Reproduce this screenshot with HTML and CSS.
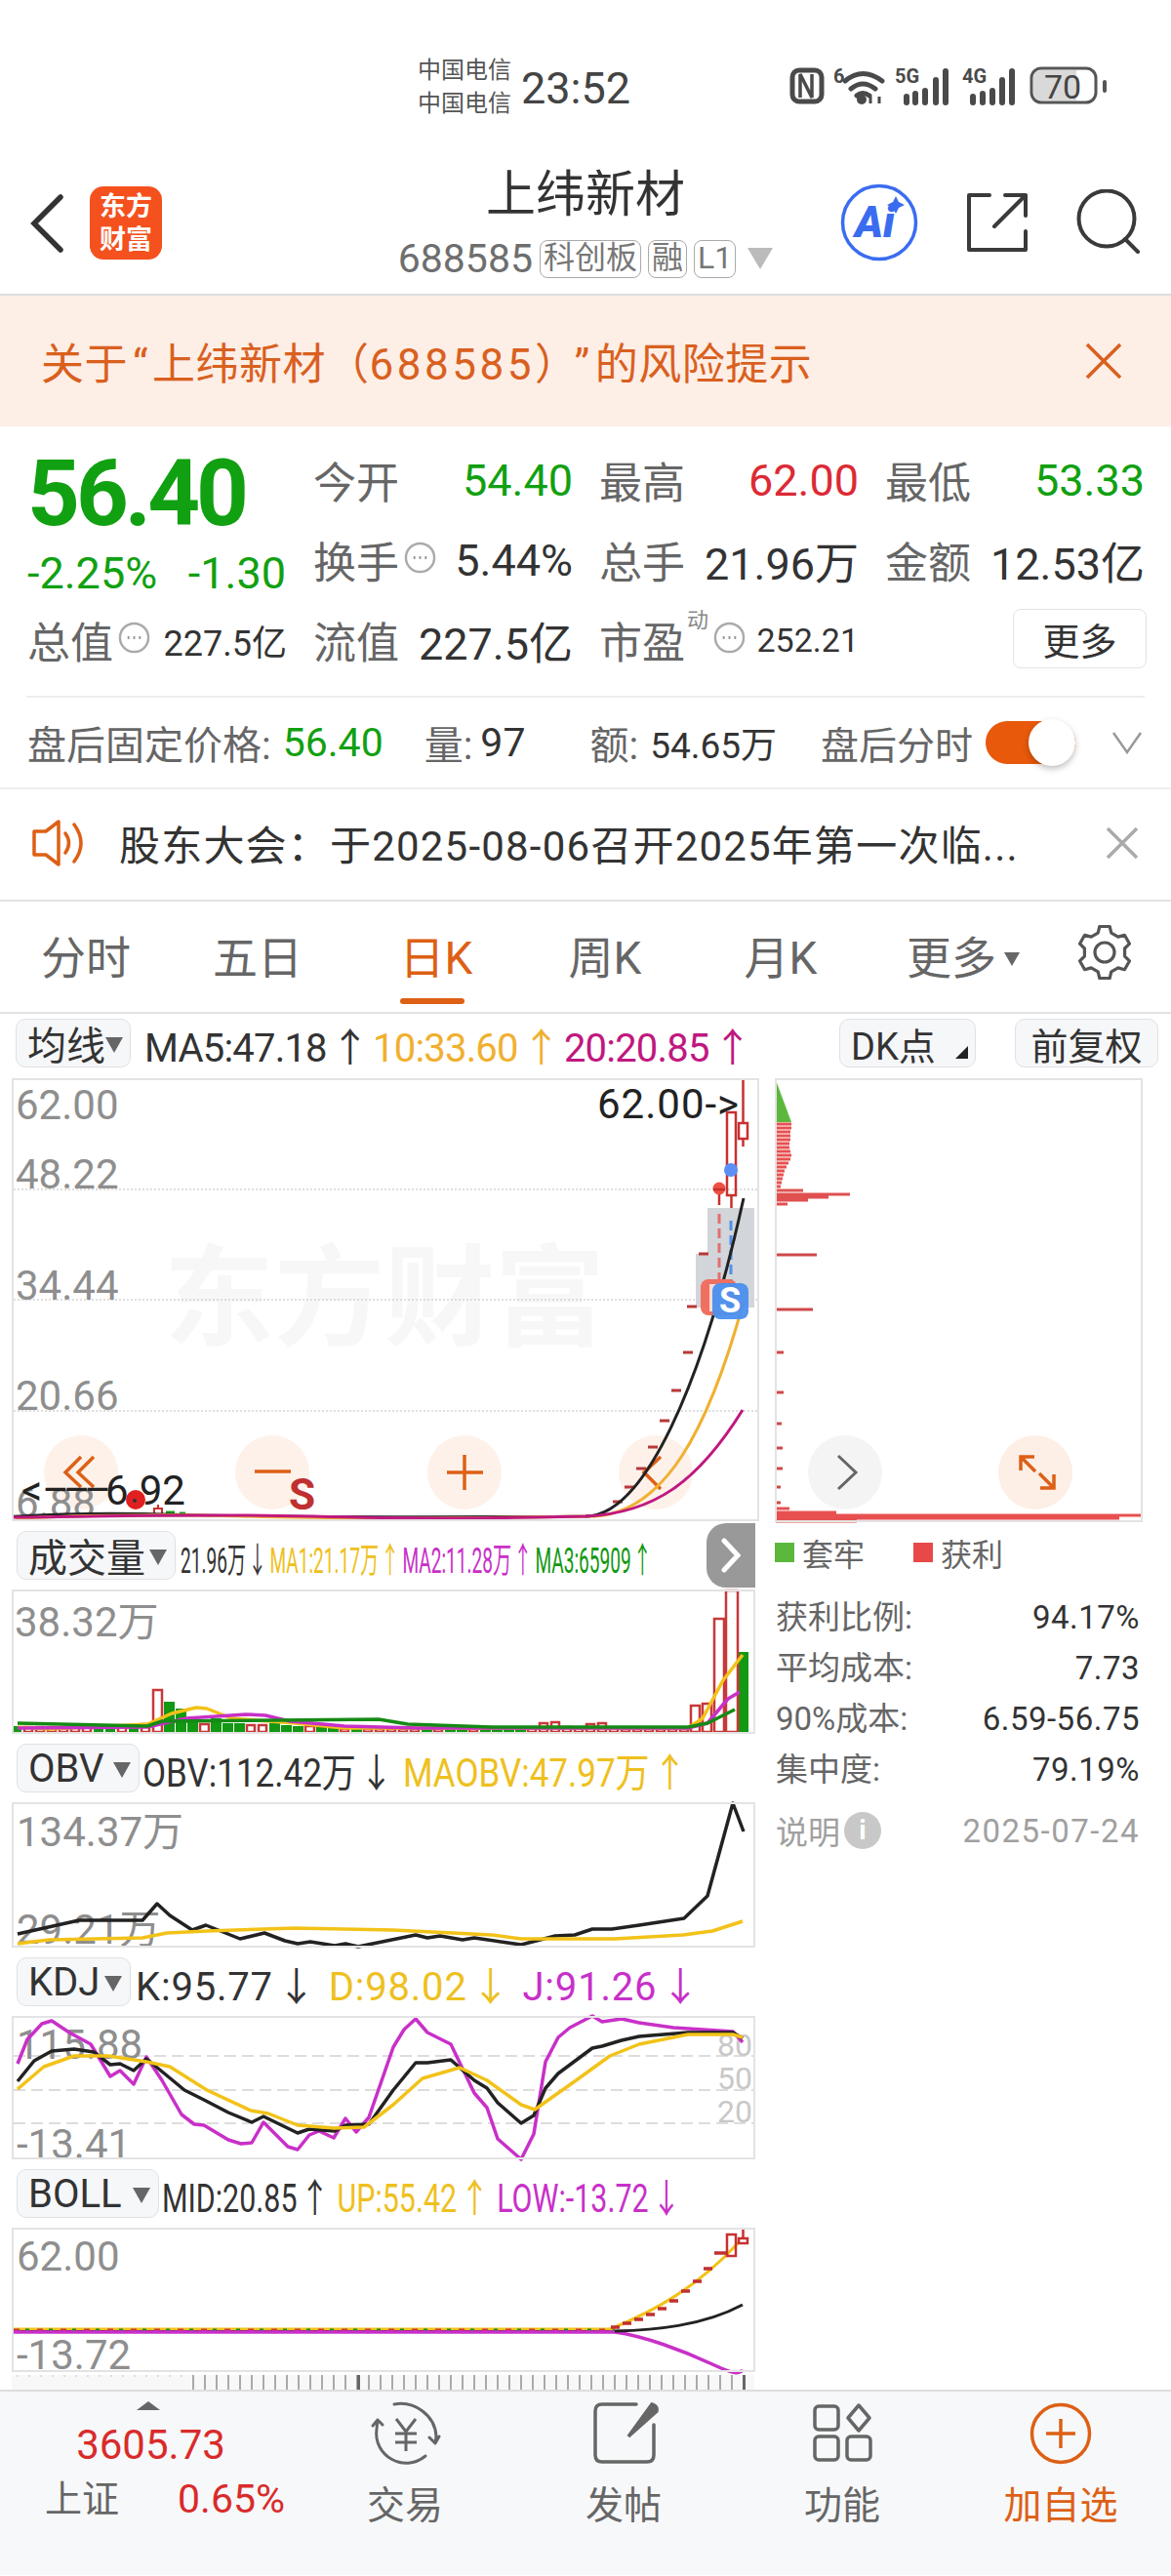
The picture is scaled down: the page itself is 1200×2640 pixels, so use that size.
FILE: index.html
```html
<!DOCTYPE html>
<html lang="zh-CN">
<head>
  <meta charset="UTF-8">
  <title>上纬新材</title>
  <link rel="stylesheet" href="styles.css">
</head>
<body>
  <svg class="defs" width="0" height="0">
    <symbol id="tip" viewBox="0 0 34 34">
      <circle cx="17" cy="17" r="15" fill="none" stroke="#aaa" stroke-width="2.5"/>
      <path d="M10 17h2M16 17h2M22 17h2" stroke="#999" stroke-width="3"/>
    </symbol>
  </svg>

  <!-- 状态栏 -->
  <div class="status">
    <div class="carrier"><span>中国电信</span><span>中国电信</span></div>
    <div class="clock">23:52</div>
    <svg class="status-icons" width="330" height="44" viewBox="805 66 330 44">
      <rect x="812" y="72" width="30" height="32" rx="7" fill="none" stroke="#4a4a4a" stroke-width="5"/>
      <path d="M820 100V76l12 24V76" fill="none" stroke="#4a4a4a" stroke-width="3.5"/>
      <text class="net" x="854" y="85">6</text>
      <path d="M866 83q18-15 38 0M872 91q12-10 25 0M878 98q6-5 13 0" fill="none" stroke="#4a4a4a" stroke-width="5" stroke-linecap="round"/>
      <circle cx="883" cy="102" r="5" fill="#4a4a4a"/>
      <path d="M892 106v-7M901 106v-7" stroke="#4a4a4a" stroke-width="3"/>
      <text class="net" x="917" y="85">5G</text>
      <path d="M929 105v-6M938 105v-9M948 105v-12M959 105v-23M969 105v-32" stroke="#4a4a4a" stroke-width="6" stroke-linecap="round"/>
      <text class="net" x="986" y="85">4G</text>
      <path d="M997 105v-6M1007 105v-9M1017 105v-12M1027 105v-23M1037 105v-32" stroke="#4a4a4a" stroke-width="6" stroke-linecap="round"/>
      <rect x="1057" y="70" width="66" height="35" rx="10" fill="#fff" stroke="#555" stroke-width="3"/>
      <path d="M1059 80a8 8 0 0 1 8-8h36v31h-36a8 8 0 0 1-8-8z" fill="#d9d9d9"/>
      <text class="batt" x="1089" y="101">70</text>
      <rect x="1130" y="82" width="4" height="13" rx="2" fill="#555"/>
    </svg>
  </div>

  <!-- 标题 -->
  <header class="topbar">
    <div class="top-left">
      <svg width="36" height="60" viewBox="0 0 36 60"><path d="M32 3L5 30l27 27" fill="none" stroke="#333" stroke-width="5.5" stroke-linecap="round"/></svg>
      <div class="logo">东方<br>财富</div>
    </div>
    <div class="top-title">
      <div class="name">上纬新材</div>
      <div class="code">688585<span class="tag">科创板</span><span class="tag">融</span><span class="tag">L1</span><i class="tri"></i></div>
    </div>
    <div class="top-right">
      <svg width="80" height="80" viewBox="0 0 80 80">
        <circle cx="40" cy="40" r="37.5" fill="none" stroke="#3b6cf0" stroke-width="3.5"/>
        <text class="ai" x="15" y="55">Ai</text>
        <path d="M57 13l3 6 6 3-6 3-3 6-3-6-6-3 6-3z" fill="#3b6cf0"/>
      </svg>
      <svg width="64" height="64" viewBox="0 0 64 64">
        <path d="M25 4H4v56h58V41M41 4h21v21M62 4L30 36" fill="none" stroke="#3a3a3a" stroke-width="4" stroke-linecap="round" stroke-linejoin="round"/>
      </svg>
      <svg width="66" height="66" viewBox="0 0 66 66">
        <circle cx="31" cy="30" r="28.5" fill="none" stroke="#3a3a3a" stroke-width="4"/>
        <path d="M50 51l13 13" stroke="#3a3a3a" stroke-width="4" stroke-linecap="round"/>
      </svg>
    </div>
  </header>

  <div class="risk">
    <span>关于<span class="ql">“</span>上纬新材（<span class="rn">688585</span>）<span class="qr">”</span>的风险提示</span>
    <svg width="38" height="38" viewBox="0 0 38 38"><path d="M2 2l34 34M36 2L2 36" stroke="#d9601e" stroke-width="3.5"/></svg>
  </div>

  <!-- 行情 -->
  <section class="quote">
    <div class="price-cell">
      <div class="price">56.40</div>
      <div class="change"><span>-2.25%</span><span>-1.30</span></div>
    </div>
    <div class="stat"><span class="lab">今开</span><span class="val down">54.40</span></div>
    <div class="stat"><span class="lab">最高</span><span class="val up">62.00</span></div>
    <div class="stat"><span class="lab">最低</span><span class="val down">53.33</span></div>
    <div class="stat"><span class="lab">换手</span><svg class="tip"><use href="#tip"/></svg><span class="val">5.44%</span></div>
    <div class="stat"><span class="lab">总手</span><span class="val">21.96万</span></div>
    <div class="stat"><span class="lab">金额</span><span class="val">12.53亿</span></div>
    <div class="stat"><span class="lab">总值</span><svg class="tip"><use href="#tip"/></svg><span class="val small">227.5亿</span></div>
    <div class="stat"><span class="lab">流值</span><span class="val">227.5亿</span></div>
    <div class="stat pe"><span class="lab">市盈</span><sup>动</sup><svg class="tip"><use href="#tip"/></svg><span class="val small">252.21</span></div>
    <div class="stat"><button class="more">更多</button></div>
  </section>

  <div class="after">
    <span>盘后固定价格:</span>
    <span class="a-price down">56.40</span>
    <span class="a-vol">量:</span>
    <span class="a-volnum">97</span>
    <span class="a-amt">额:</span>
    <span class="a-amtnum">54.65万</span>
    <span class="a-switch">盘后分时</span>
    <div class="toggle"><i></i></div>
    <svg class="a-chev" width="32" height="24" viewBox="0 0 32 24"><path d="M2 2l14 20L30 2" fill="none" stroke="#999" stroke-width="2.5"/></svg>
  </div>

  <div class="notice">
    <svg width="56" height="48" viewBox="0 0 56 48">
      <path d="M2 12h12L27 2v44L14 36H2z" fill="none" stroke="#dd6015" stroke-width="3.5" stroke-linejoin="round"/>
      <path d="M34 14q7 10 0 20M43 5q14 19 0 38" fill="none" stroke="#dd6015" stroke-width="3.5" stroke-linecap="round"/>
    </svg>
    <span class="n-text">股东大会：于2025-08-06召开2025年第一次临...</span>
    <svg class="n-close" width="34" height="32" viewBox="0 0 34 32"><path d="M2 1l30 30M32 1L2 31" stroke="#aaa" stroke-width="3.5"/></svg>
  </div>

  <nav class="tabs">
    <span>分时</span>
    <span>五日</span>
    <span class="on">日K</span>
    <span>周K</span>
    <span>月K</span>
    <span>更多<i class="tri dark"></i></span>
    <svg width="58" height="58" viewBox="0 0 58 56">
      <path d="M22.2 8.1L23.8 1.5H34.2L35.8 8.1L42.8 12.1L49.4 10.3L54.5 19.2L49.6 24V32L54.5 36.8L49.4 45.7L42.8 43.9L35.8 47.9L34.2 54.5H23.8L22.2 47.9L15.2 43.9L8.6 45.7L3.5 36.8L8.4 32V24L3.5 19.2L8.6 10.3L15.2 12.1z" fill="none" stroke="#555" stroke-width="3.2" stroke-linejoin="round"/>
      <circle cx="29" cy="28" r="10" fill="none" stroke="#555" stroke-width="3.2"/>
    </svg>
  </nav>

  <!-- K线区 -->
  <section class="chart">
    <div class="head main-head">
      <button class="pick w-ma">均线<i class="tri"></i></button>
      <div class="legend ma"><span>MA5:47.18<i class="ar">↑</i></span><span class="c-or">10:33.60<i class="ar">↑</i></span><span class="c-ma">20:20.85<i class="ar">↑</i></span></div>
      <button class="pick dk">DK点<i class="corner"></i></button>
      <button class="pick fq">前复权</button>
    </div>

    <div class="split">
      <div class="panels">
        <div class="plot plot-main">
          <svg width="766" height="454" viewBox="12 1106 766 454">
            <text class="mark" x="168" y="1371">东方财富</text>
            <path d="M14 1220H776M14 1333H776M14 1447H776" stroke="#d4d4d4" stroke-width="1.5" stroke-dasharray="2 2"/>
            <path d="M725 1239h48v102h-60v-55h12z" fill="#d2d5da"/>
            <g fill="#fdeee6" fill-opacity=".85">
              <circle cx="83" cy="1510" r="38"/><circle cx="279" cy="1510" r="38"/><circle cx="476" cy="1510" r="38"/><circle cx="672" cy="1510" r="38"/>
            </g>
            <text class="axis" x="16" y="1148">62.00</text>
            <text class="axis" x="16" y="1219">48.22</text>
            <text class="axis" x="16" y="1333">34.44</text>
            <text class="axis" x="16" y="1446">20.66</text>
            <text class="axis" x="16" y="1556">6.88</text>
            <text class="label wide" x="612" y="1147">62.00-&gt;</text>
            <g fill="none" stroke="#dd6015" stroke-width="3.5">
              <path d="M83 1494l-16 16 16 15M96 1494l-16 16 16 15"/>
              <path d="M261 1509h37M458 1510h37M476 1492v36"/>
              <path d="M677 1494l-17 16 17 17"/>
            </g>
            <text class="label" x="22" y="1543">&lt;<tspan class="dash">–––</tspan>6.92</text>
            <text class="sell" x="296" y="1548">S</text>
            <circle cx="139" cy="1538" r="10" fill="#e02020"/><circle cx="138" cy="1539" r="2" fill="#333"/>
            <path d="M158 1553v-6h8v6M162 1547v-4" fill="none" stroke="#c83030" stroke-width="2"/>
            <path d="M170 1551h9M184 1552h6" stroke="#1a9a1a" stroke-width="3"/>
            <path d="M721 1286h-10M709 1340h-10M705 1387h-10M693 1426h-10M681 1457h-10M669 1484h-10M657 1506h-10M645 1525h-10M633 1540h-10" stroke="#b83838" stroke-width="3" transform="translate(5)"/>
            <path d="M14 1555C60 1552 120 1551 180 1553S400 1556 600 1555" fill="none" stroke="#222" stroke-width="2.5"/>
            <path d="M16 1557C80 1554 150 1552 250 1555S450 1557 610 1555" fill="none" stroke="#f0b030" stroke-width="3"/>
            <path d="M737 1245V1312" fill="none" stroke="#e07070" stroke-width="3" stroke-dasharray="10 5"/>
            <path d="M749 1252V1315" fill="none" stroke="#5090e8" stroke-width="3" stroke-dasharray="10 5"/>
            <path d="M600 1555C660 1555 720 1420 762 1229" fill="none" stroke="#222" stroke-width="3"/>
            <path d="M610 1555C680 1550 725 1470 762 1335" fill="none" stroke="#f0b030" stroke-width="3"/>
            <path d="M14 1556C120 1555 200 1552 320 1555S500 1557 600 1555C670 1552 715 1520 761 1446" fill="none" stroke="#c01880" stroke-width="3"/>
            <g fill="none" stroke="#c83030" stroke-width="2.5">
              <rect x="745" y="1141" width="9" height="85"/><path d="M749.5 1226v13"/>
              <rect x="757" y="1152" width="9" height="16"/><path d="M761.5 1106v46M761.5 1168v8"/>
            </g>
            <circle cx="737" cy="1219" r="6.5" fill="#ef5040"/><path d="M737 1225v11M731 1220h12" stroke="#c83030" stroke-width="2.5"/>
            <circle cx="749" cy="1200" r="7" fill="#5b8ff5"/>
            <rect x="718" y="1312" width="37" height="37" rx="8" fill="#ef7060"/>
            <rect x="727" y="1317" width="20" height="28" fill="#fff" fill-opacity=".75"/>
            <rect x="730" y="1316" width="37" height="37" rx="8" fill="#4a8fee" fill-opacity=".95"/>
            <text class="badge" x="748" y="1346">S</text>
          </svg>
        </div>

        <div class="head vol-head">
          <button class="pick w-vol">成交量<i class="tri"></i></button>
          <div class="legend squeeze"><span>21.96万<i class="ar">↓</i></span><span class="c-gold">MA1:21.17万<i class="ar">↑</i></span><span class="c-pur">MA2:11.28万<i class="ar">↑</i></span><span class="c-grn">MA3:65909<i class="ar">↑</i></span></div>
          <div class="tab-next"><svg width="20" height="36" viewBox="0 0 20 36"><path d="M3 3l14 15L3 33" fill="none" stroke="#fff" stroke-width="5" stroke-linecap="round"/></svg></div>
        </div>
        <div class="plot plot-sub vol">
          <svg width="762" height="148" viewBox="12 1630 762 148">
            <path d="M14 1777V1770h8v7zM96 1777v-5h10v5zM108 1777v-5h10v5zM132 1777v-6h10v6zM168 1777v-32h11v32zM180 1777v-25h11v25zM192 1777v-11h11v11zM216 1777v-15h11v15zM228 1777v-10h11v10zM240 1777v-10h11v10zM276 1777v-10h11v10zM288 1777v-8h11v8zM300 1777v-7h11v7zM324 1777v-6h11v6zM336 1777v-5h11v5zM360 1777v-5h11v5zM432 1777v-5h11v5zM456 1777v-5h11v5zM468 1777v-5h11v5zM492 1777v-5h11v5zM504 1777v-5h11v5zM516 1777v-5h11v5zM528 1777v-5h11v5zM757 1777v-83h10v83z" fill="#129812"/>
            <path d="M25 1776v-5h8v5zM37 1776v-5h8v5zM49 1776v-5h8v5zM61 1776v-5h8v5zM73 1776v-5h8v5zM85 1776v-5h8v5zM121 1776v-5h8v5zM145 1776v-8h8v8zM157 1776v-43h9v43zM205 1776v-8h9v8zM253 1776v-7h8v7zM265 1776v-7h8v7zM313 1776v-6h9v6zM349 1776v-3h8v3zM373 1776v-3h8v3zM385 1776v-3h8v3zM397 1776v-3h8v3zM409 1776v-3h8v3zM421 1776v-3h8v3zM445 1776v-3h8v3zM481 1776v-3h8v3zM541 1776v-4h8v4zM553 1776v-9h8v9zM565 1776v-10h8v10zM577 1776v-5h8v5zM589 1776v-4h8v4zM601 1776v-8h8v8zM613 1776v-9h8v9zM625 1776v-4h8v4zM637 1776v-3h8v3zM649 1776v-3h8v3zM661 1776v-3h8v3zM673 1776v-3h8v3zM685 1776v-3h8v3zM697 1776v-3h8v3zM708 1776v-27h9v27zM720 1776v-29h9v29zM732 1776v-116h10v116zM744 1776v-145h12v145z" fill="none" stroke="#c83838" stroke-width="2.5"/>
            <text class="axis" x="15" y="1678">38.32万</text>
            <polyline class="ln" stroke="#f2c218" points="18,1771 50,1773 151,1768 176,1757 201,1751 212,1752 237,1762 302,1767 353,1772 705,1772 720,1762 741,1723 761,1697"/>
            <polyline class="ln" stroke="#c830c8" points="18,1772 151,1771 191,1762 252,1758 272,1759 297,1765 353,1770 428,1772 705,1772 725,1767 746,1742 758,1735"/>
            <polyline class="ln" stroke="#158a15" points="18,1767 151,1770 166,1765 282,1764 388,1763 418,1768 504,1771 705,1771 725,1767 753,1753"/>
          </svg>
        </div>

        <div class="head">
          <button class="pick w-obv">OBV<i class="tri"></i></button>
          <div class="legend obv-legend"><span>OBV:112.42万<i class="ar">↓</i></span><span class="c-gold">MAOBV:47.97万<i class="ar">↑</i></span></div>
        </div>
        <div class="plot plot-sub obv">
          <svg width="762" height="149" viewBox="12 1847 762 149">
            <text class="axis" x="17" y="1892">134.37万</text>
            <text class="axis" x="17" y="1992">29.21万</text>
            <polyline class="ln" stroke="#222" points="18,1982 81,1968 146,1968 161,1951 174,1963 197,1978 211,1973 246,1987 271,1981 292,1989 305,1992 318,1990 343,1994 354,1992 367,1995 426,1983 438,1986 451,1984 474,1988 486,1986 534,1993 569,1984 589,1983 607,1977 627,1977 655,1973 701,1966 725,1943 751,1848 762,1877"/>
            <polyline class="ln" stroke="#f2c218" points="18,1992 50,1988 146,1986 171,1981 212,1979 302,1976 403,1978 504,1983 534,1987 630,1987 700,1983 730,1979 761,1969"/>
          </svg>
        </div>

        <div class="head">
          <button class="pick w-kdj">KDJ<i class="tri"></i></button>
          <div class="legend kdj"><span>K:95.77<i class="ar">↓</i></span><span class="c-gold">D:98.02<i class="ar">↓</i></span><span class="c-pur">J:91.26<i class="ar">↓</i></span></div>
        </div>
        <div class="plot plot-sub kdj-plot">
          <svg width="762" height="147" viewBox="12 2066 762 147">
            <path d="M14 2107H772M14 2142H772M14 2176H772" stroke="#ddd" stroke-width="2" stroke-dasharray="12 6"/>
            <text class="axis" x="17" y="2110">115.88</text>
            <text class="axis" x="17" y="2212">-13.41</text>
            <text class="axis pale" x="735" y="2107">80</text>
            <text class="axis pale" x="735" y="2141">50</text>
            <text class="axis pale" x="735" y="2175">20</text>
            <polyline class="ln" stroke="#c830c8" points="18,2115 28,2090 43,2074 53,2071 71,2083 93,2095 113,2128 123,2122 137,2136 150,2108 166,2132 186,2167 199,2177 209,2178 234,2193 247,2197 258,2196 270,2175 295,2200 305,2203 317,2188 327,2184 342,2191 354,2171 365,2185 378,2170 403,2098 414,2080 426,2069 438,2083 462,2095 486,2145 499,2160 510,2192 534,2213 547,2187 559,2113 572,2088 584,2078 607,2066 617,2072 637,2069 655,2073 690,2078 751,2082 761,2093"/>
            <polyline class="ln" stroke="#222" points="18,2133 35,2112 53,2102 76,2100 96,2103 113,2116 123,2115 137,2122 150,2110 166,2123 189,2142 209,2152 234,2165 258,2175 270,2169 305,2186 317,2182 343,2184 354,2178 378,2177 403,2142 426,2114 438,2114 462,2111 486,2132 499,2140 510,2155 534,2176 547,2168 559,2140 572,2125 607,2099 617,2097 637,2091 655,2087 705,2083 751,2083 761,2089"/>
            <polyline class="ln" stroke="#f2c218" points="18,2141 45,2118 76,2107 111,2107 150,2113 174,2118 212,2142 257,2163 275,2166 305,2178 343,2181 373,2180 403,2157 433,2130 471,2119 499,2132 534,2157 548,2162 589,2133 625,2107 655,2095 705,2085 751,2085 761,2088"/>
          </svg>
        </div>

        <div class="head">
          <button class="pick w-boll">BOLL<i class="tri"></i></button>
          <div class="legend boll"><span>MID:20.85<i class="ar">↑</i></span><span class="c-gold">UP:55.42<i class="ar">↑</i></span><span class="c-pur">LOW:-13.72<i class="ar">↓</i></span></div>
        </div>
        <div class="plot plot-sub boll-plot">
          <svg width="762" height="148" viewBox="12 2284 762 148">
            <text class="axis" x="17" y="2328">62.00</text>
            <text class="axis" x="17" y="2429">-13.72</text>
            <path d="M14 2388H630" stroke="#f2c218" stroke-width="3"/>
            <path d="M14 2390H630" stroke="#222" stroke-width="2"/>
            <path d="M14 2389H630" stroke="#c83838" stroke-width="3" stroke-dasharray="6 18"/>
            <path d="M26 2389H630" stroke="#158a15" stroke-width="3" stroke-dasharray="4 20"/>
            <path d="M14 2391H630C660 2395 700 2410 730 2424S755 2431 761 2431" fill="none" stroke="#c830c8" stroke-width="3.5"/>
            <path d="M630 2390C670 2389 720 2385 761 2363" fill="none" stroke="#222" stroke-width="3"/>
            <path d="M625 2388C670 2370 715 2345 758 2298" fill="none" stroke="#f2c218" stroke-width="3"/>
            <path d="M626 2386h9M638 2382h9M650 2378h9M662 2373h9M674 2367h9M686 2359h9M698 2349h9M710 2339h9M721 2326h9M732 2310h12" stroke="#c03030" stroke-width="3.5"/>
            <path d="M745 2291h9v22h-9zM757 2295h9v5h-9zM761.5 2284v11" fill="none" stroke="#c83030" stroke-width="2.5"/>
          </svg>
        </div>
        <div class="ticks"><i class="t1"></i><i class="t2"></i></div>
      </div>

      <aside class="chips">
        <div class="plot plot-chips">
          <svg width="377" height="455" viewBox="794 1106 377 455">
            <path d="M795 1108v43h16z" fill="#5cb83c"/>
            <path d="M795 1153h16M795 1157h16M795 1161h15M795 1165h15M795 1169h15M795 1173h14M795 1177h14M795 1181h15M795 1185h16M795 1189h15M795 1193h13M795 1197h11M795 1201h9M795 1205h8M795 1209h7M795 1213h6M795 1217h5" stroke="#e85050" stroke-width="3"/>
            <path d="M795 1221h28M795 1225h76M795 1228h54M795 1231h33M795 1235h12" stroke="#e05050" stroke-width="3"/>
            <path d="M795 1287h42M795 1343h38M795 1387h8M795 1428h8M795 1460h6M795 1485h7M795 1506h7M795 1525h5M795 1541h5" stroke="#cf4848" stroke-width="3"/>
            <path d="M795 1547h14M795 1551h62M795 1554h375M795 1557h352M795 1560h83" stroke="#e85050" stroke-width="3"/>
            <circle cx="866" cy="1510" r="38" fill="#f4f4f4"/>
            <path d="M859 1493l18 17-18 17" fill="none" stroke="#666" stroke-width="3"/>
            <circle cx="1061" cy="1510" r="38" fill="#fdeee6"/>
            <path d="M1046 1508v-14h14M1046 1494l15 15M1080 1512v14h-14M1080 1526l-15-15" fill="none" stroke="#dd6015" stroke-width="3.5"/>
          </svg>
        </div>
        <div class="keys"><i class="k-g"></i><span>套牢</span><i class="k-r"></i><span>获利</span></div>
        <dl class="figures">
          <div><dt>获利比例:</dt><dd>94.17%</dd></div>
          <div><dt>平均成本:</dt><dd>7.73</dd></div>
          <div><dt>90%成本:</dt><dd>6.59-56.75</dd></div>
          <div><dt>集中度:</dt><dd>79.19%</dd></div>
        </dl>
        <div class="note"><span>说明</span><i class="info">i</i><span class="date">2025-07-24</span></div>
      </aside>
    </div>
  </section>

  <!-- 底部 -->
  <footer class="dock">
    <div class="index">
      <i class="tri-up"></i>
      <div class="idx-num">3605.73</div>
      <div class="idx-row"><span>上证</span><b>0.65%</b></div>
    </div>
    <div class="dock-item">
      <svg width="74" height="66" viewBox="0 0 74 66" fill="none" stroke="#666" stroke-width="3">
        <path d="M26 3C46 -1 68 14 69 36l-1 7M68 43l-6-6M68 43l4-7" stroke-linecap="round"/>
        <path d="M58 56C36 74 4 56 8 28l1-9M9 19l-5 6M9 19l5 5" stroke-linecap="round"/>
        <path d="M28 18l10 13 10-13M38 31v20M27 33h22M27 42h22"/>
      </svg>
      <span>交易</span>
    </div>
    <div class="dock-item">
      <svg width="74" height="66" viewBox="0 0 74 66" fill="none" stroke="#666" stroke-width="3.5">
        <path d="M50 3H15q-7 0-7 7v45q0 7 7 7h46q7 0 7-7V24" stroke-linecap="round"/>
        <path d="M66 3q6 2 5 7L42 36z" fill="#666"/>
      </svg>
      <span>发帖</span>
    </div>
    <div class="dock-item">
      <svg width="74" height="66" viewBox="0 0 74 66" fill="none" stroke="#666" stroke-width="3.5">
        <rect x="9" y="5" width="24" height="24" rx="4"/><rect x="9" y="36" width="24" height="24" rx="4"/><rect x="42" y="36" width="24" height="24" rx="4"/>
        <path d="M54 4l11 13-11 13-11-13z" stroke-linejoin="round"/>
      </svg>
      <span>功能</span>
    </div>
    <div class="dock-item plus">
      <svg width="74" height="66" viewBox="0 0 74 66" fill="none" stroke="#dd6015" stroke-width="3.5">
        <circle cx="37" cy="33" r="29.5"/><path d="M22 33h30M37 18v30"/>
      </svg>
      <span>加自选</span>
    </div>
  </footer>
</body>
</html>
```

FILE: styles.css
```css
* { margin: 0; padding: 0; box-sizing: border-box; }

body {
  width: 1200px;
  height: 2640px;
  overflow: hidden;
  background: #fff;
  color: #333;
  font-family: Roboto, "Noto Sans CJK SC", sans-serif;
}

.defs { position: absolute; }
i { font-style: normal; }
button { font-family: inherit; color: inherit; }

.up { color: #dc2a35; }
.down { color: #11a011; }

/* 状态栏 */
.status {
  height: 160px;
  display: flex;
  padding: 55px 0 0 428px;
  color: #555;
}
.carrier { display: flex; flex-direction: column; font-size: 24px; line-height: 34px; }
.clock { font-size: 45px; margin-left: 10px; line-height: 72px; color: #444; }
.status-icons { margin: 11px 0 0 159px; }
.net { font-size: 20px; font-weight: 700; fill: #4a4a4a; }
.batt { font-size: 34px; fill: #444; text-anchor: middle; }

/* 标题栏 */
.topbar {
  height: 143px;
  border-bottom: 2px solid #dcdcdc;
  display: grid;
  grid-template-columns: 1fr auto 1fr;
}
.top-left { display: flex; align-items: flex-start; padding: 31px 0 0 30px; gap: 26px; }
.top-left svg { margin-top: 8px; }
.logo {
  width: 74px;
  height: 75px;
  background: #f4511e;
  border-radius: 14px;
  color: #fff;
  font-size: 27px;
  line-height: 34px;
  font-weight: 700;
  text-align: center;
  padding-top: 4px;
}
.top-title { text-align: center; padding-top: 5px; }
.name { font-size: 51px; line-height: 70px; color: #333; }
.code { display: flex; align-items: center; font-size: 41px; line-height: 40px; color: #6e6e6e; margin-top: 10px; }
.tag {
  border: 1.5px solid #aaa;
  border-radius: 8px;
  font-size: 32px;
  height: 39px;
  line-height: 35px;
  padding: 0 3px;
  margin-left: 7px;
  color: #777;
}
.tri {
  display: inline-block;
  width: 0;
  height: 0;
  border-left: 13px solid transparent;
  border-right: 13px solid transparent;
  border-top: 22px solid #bbb;
  margin-left: 12px;
}
.top-right { display: flex; justify-content: flex-end; align-items: flex-start; padding: 28px 31px 0 0; gap: 50px; }
.top-right svg:nth-child(2) { margin-top: 8px; margin-left: -2px; }
.top-right svg:nth-child(3) { margin-top: 6px; }
.ai { font-size: 44px; font-weight: 900; font-style: italic; fill: #3b6cf0; }

.risk {
  height: 134px;
  background: #fdeee6;
  color: #d9601e;
  font-size: 44px;
  letter-spacing: 0.5px;
  display: flex;
  align-items: center;
  justify-content: space-between;
  padding: 0 50px 0 42px;
}
.ql { padding: 0 4px 0 5px; }
.qr { padding: 0 5px 0 18px; }
.rn { letter-spacing: 3.5px; }

/* 行情 */
.quote {
  height: 276px;
  padding: 14px 27px 0 28px;
  display: grid;
  grid-template-columns: 265px 265px 265px 265px;
  grid-auto-rows: 82px;
  column-gap: 28px;
}
.price-cell { grid-row: span 2; color: #11a011; }
.price { font-size: 94px; font-weight: 700; letter-spacing: -4px; line-height: 90px; margin-top: 10px; }
.change { display: flex; justify-content: space-between; font-size: 45px; line-height: 50px; margin-top: 12px; }
.stat { display: flex; align-items: center; }
.lab { font-size: 44px; color: #666; }
.val { font-size: 45px; margin-left: auto; margin-right: -1px; color: #333; }
.val.down { color: #11a011; }
.val.up { color: #dc2a35; }
.val.small { font-size: 36px; }
.tip { width: 33px; height: 33px; margin: -6px 0 0 5px; }
.pe sup { font-size: 22px; color: #888; align-self: flex-start; margin: 8px 0 0 2px; line-height: 26px; }
.pe .val { font-size: 34px; }
.more {
  margin-left: auto;
  margin-right: -3px;
  width: 137px;
  height: 61px;
  margin-top: -3px;
  border: 1.5px solid #e4e4e4;
  border-radius: 8px;
  background: #fff;
  font-size: 38px;
}

.after {
  margin: 0 27px;
  border-top: 2px solid #eee;
  height: 94px;
  display: flex;
  align-items: center;
  font-size: 40px;
  color: #666;
  padding-left: 1px;
  white-space: nowrap;
}
.after > * { flex-shrink: 0; }
.a-price { margin-left: 12px; font-size: 41px; }
.a-vol { margin-left: 42px; }
.a-volnum { margin-left: 8px; color: #333; font-size: 41px; }
.a-amt { margin-left: 66px; }
.a-amtnum { margin-left: 12px; font-size: 37px; color: #333; }
.a-switch { margin-left: 45px; font-size: 39px; }
.toggle {
  width: 92px;
  height: 44px;
  margin-left: 13px;
  background: #e8590c;
  border-radius: 22px;
  position: relative;
}
.toggle i {
  position: absolute;
  right: 0;
  top: -2px;
  width: 48px;
  height: 48px;
  border-radius: 50%;
  background: #fff;
  box-shadow: 0 3px 6px rgba(0, 0, 0, 0.25);
}
.a-chev { margin-left: 37px; }

.notice {
  height: 117px;
  border-top: 2px solid #eee;
  border-bottom: 2px solid #e2e2e2;
  display: flex;
  align-items: center;
  padding: 0 33px 4px;
}
.n-text { font-size: 42px; letter-spacing: 1.2px; margin-left: 33px; color: #333; }
.n-close { margin-left: auto; }

.tabs {
  height: 115px;
  border-bottom: 2px solid #e2e2e2;
  display: grid;
  grid-template-columns: 176px 176px 190px 156px 204px 170px 1fr;
  align-items: center;
  text-align: center;
  font-size: 46px;
  color: #666;
  padding-bottom: 6px;
}
.tabs svg { margin: -4px 0 0 31px; }
.tabs .on { color: #dd6015; position: relative; }
.tabs .on::after {
  content: "";
  position: absolute;
  left: 58px;
  bottom: -18px;
  width: 66px;
  height: 6px;
  border-radius: 3px;
  background: #dd6015;
}
.tri.dark { border-top-color: #666; border-left-width: 8px; border-right-width: 8px; border-top-width: 14px; margin-left: 8px; vertical-align: 8px; }

/* K线区 */
.chart { height: 1410px; }
.head {
  height: 70px;
  padding: 10px 0 0 17px;
  display: flex;
  align-items: flex-start;
  position: relative;
  font-size: 40px;
}
.main-head { height: 66px; padding: 5px 13px 0 16px; }
.pick {
  flex-shrink: 0;
  height: 50px;
  padding: 0 8px 0 11px;
  background: #f6f7f9;
  border: 1.5px solid #e0e1e4;
  border-radius: 10px;
  font-size: 40px;
  display: flex;
  align-items: center;
  justify-content: space-between;
  white-space: nowrap;
}
.pick .tri { border-top-color: #666; border-left-width: 9px; border-right-width: 9px; border-top-width: 16px; margin: 4px 0 0; }
.w-ma { width: 118px; }
.w-vol { width: 163px; }
.w-obv { width: 126px; }
.w-kdj { width: 117px; }
.w-boll { width: 146px; }
.pick.dk { margin-left: auto; padding-right: 12px; font-size: 38px; position: relative; width: 140px; }
.corner {
  position: absolute;
  right: 7px;
  bottom: 8px;
  width: 0;
  height: 0;
  border-left: 13px solid transparent;
  border-bottom: 13px solid #222;
}
.pick.fq { margin-left: 40px; font-size: 38px; width: 147px; justify-content: center; padding: 0; }

.legend { display: flex; white-space: nowrap; line-height: 50px; transform-origin: left center; margin-top: 2px; }
.ar { font-family: "Noto Sans CJK SC", sans-serif; margin: 0 -8px 0 4px; }
.ma { margin-left: 14px; gap: 12px; letter-spacing: -0.8px; }
.obv-legend { margin-left: 3px; gap: 19px; transform: scaleX(0.875); }
.kdj { margin-left: 5px; gap: 20px; letter-spacing: 0.8px; }
.boll { margin-left: 3px; gap: 18px; transform: scaleX(0.76); }
.squeeze { font-size: 36px; transform: scaleX(0.53); margin: 2px 0 0 5px; gap: 14px; }
.c-or { color: #f0b030; }
.c-ma { color: #c01880; }
.c-gold { color: #eec020; }
.c-pur { color: #c830c8; }
.c-grn { color: #129812; }

.tab-next {
  position: absolute;
  right: 6px;
  top: 2px;
  width: 50px;
  height: 66px;
  background: #999;
  border-radius: 20px 0 0 20px;
  display: flex;
  align-items: center;
  justify-content: center;
}

.split { display: flex; }
.panels { width: 780px; }
.plot { position: relative; outline: 2px solid #e3e3e3; outline-offset: -2px; margin-left: 12px; }
.plot svg { display: block; overflow: visible; }
.plot-main { width: 766px; height: 454px; }
.plot-sub { width: 762px; }
.vol { height: 148px; }
.obv { height: 149px; }
.kdj-plot { height: 147px; }
.boll-plot { height: 148px; }
.boll-plot + .ticks { margin-top: 3px; }

.axis { font-size: 42px; fill: #8e8e8e; }
.axis.pale { font-size: 32px; fill: #c8c8c8; }
.label { font-size: 42px; fill: #222; }
.label.wide { letter-spacing: 1px; }
.dash { letter-spacing: -6px; }
.mark { font-size: 113px; font-weight: 700; fill: #f7f7f7; }
.sell { font-size: 44px; font-weight: 700; fill: #c03030; }
.badge { font-size: 36px; font-weight: 700; fill: #fff; text-anchor: middle; }
.ln { fill: none; stroke-width: 3.5; stroke-linejoin: round; }

.ticks {
  position: relative;
  width: 761px;
  height: 15px;
  margin-left: 12px;
  background:
    repeating-linear-gradient(90deg, #aaa 0 2px, transparent 2px 12px) 185px 0 / 576px 100% no-repeat,
    repeating-linear-gradient(90deg, #ddd 0 2px, transparent 2px 12px) 5px 0 / 180px 2px no-repeat,
    #f8f8f8;
}
.ticks i { position: absolute; top: 0; width: 3px; height: 15px; background: #666; }
.t1 { left: 354px; }
.t2 { left: 749px; }

/* 筹码 */
.chips { margin-left: 14px; width: 378px; }
.plot-chips { margin-left: 0; width: 377px; height: 455px; }
.keys { display: flex; align-items: center; font-size: 32px; color: #666; height: 40px; margin-top: 11px; }
.keys i { width: 20px; height: 20px; }
.keys span { margin-left: 8px; }
.k-g { background: #5cb83c; }
.k-r { background: #e84848; margin-left: 50px; }
.figures { margin-top: 21px; font-size: 33px; }
.figures div { display: flex; justify-content: space-between; height: 52px; line-height: 52px; padding: 0 4px 0 1px; }
.figures dt { color: #666; }
.figures dd { color: #333; letter-spacing: 0.5px; }
.note { display: flex; align-items: center; font-size: 33px; color: #a0a0a0; height: 44px; margin-top: 14px; padding: 0 4px 0 1px; }
.info {
  width: 38px;
  height: 38px;
  margin-left: 4px;
  border-radius: 50%;
  background: #c8c8c8;
  color: #fff;
  font-size: 28px;
  font-weight: 700;
  text-align: center;
  line-height: 38px;
}
.date { margin-left: auto; letter-spacing: 1.5px; }

/* 底部 */
.dock {
  height: 190px;
  background: #f7f8fa;
  border-top: 2px solid #ddd;
  display: grid;
  grid-template-columns: 303px repeat(4, 224px);
  color: #666;
}
.index { position: relative; text-align: center; padding-top: 32px; }
.tri-up {
  position: absolute;
  left: 140px;
  top: 10px;
  width: 0;
  height: 0;
  border-left: 12px solid transparent;
  border-right: 12px solid transparent;
  border-bottom: 9px solid #666;
}
.idx-num { font-size: 42px; line-height: 46px; color: #d92b2b; margin-left: 6px; }
.idx-row { display: flex; align-items: center; padding: 0 11px 0 46px; justify-content: space-between; font-size: 38px; line-height: 50px; margin-top: 7px; }
.idx-row b { font-weight: 400; font-size: 41px; color: #d92b2b; }
.dock-item { display: flex; flex-direction: column; align-items: center; padding-top: 10px; font-size: 39px; line-height: 50px; }
.dock-item span { margin-top: 16px; }
.plus { color: #dd6015; }
```
